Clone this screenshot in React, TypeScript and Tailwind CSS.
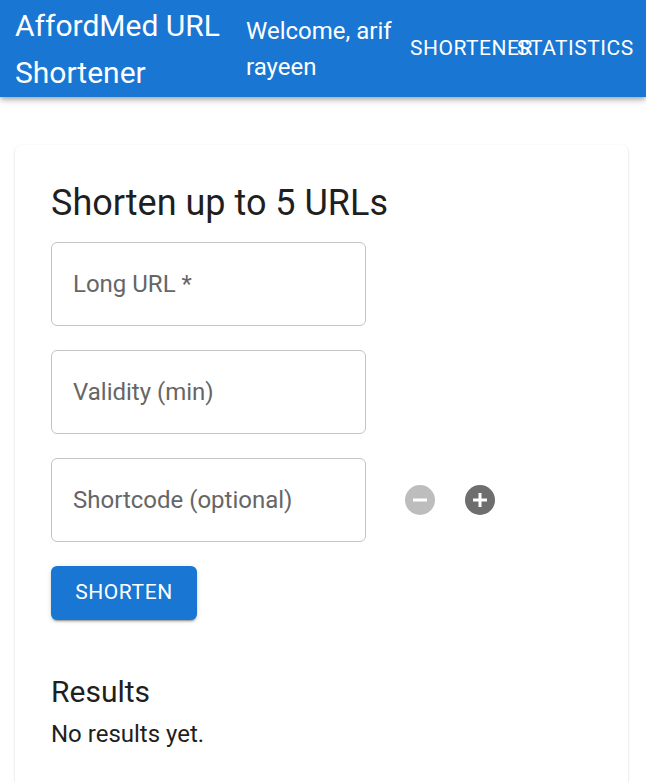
const fields = ['Long URL *', 'Validity (min)', 'Shortcode (optional)'];

function Field({ label, last }: { label: string; last?: boolean }) {
  return (
    <div className="flex items-center">
      <div className="w-[315px] h-[84px] border border-[#c4c4c4] rounded-[6px] flex items-center px-[21px]">
        <span className="text-[24px] text-[#666666]">{label}</span>
      </div>
      {last && (
        <div className="flex items-center ml-[39px] gap-[30px]">
          <svg width="30" height="30" viewBox="0 0 30 30">
            <circle cx="15" cy="15" r="15" fill="#bdbdbd" />
            <rect x="8" y="13.5" width="14" height="3" fill="#fff" />
          </svg>
          <svg width="30" height="30" viewBox="0 0 30 30">
            <circle cx="15" cy="15" r="15" fill="#6e6e6e" />
            <rect x="8" y="13.5" width="14" height="3" fill="#fff" />
            <rect x="13.5" y="8" width="3" height="14" fill="#fff" />
          </svg>
        </div>
      )}
    </div>
  );
}

export default function App() {
  return (
    <div className="min-h-[782px] bg-white font-['Roboto',sans-serif] text-[#1f1f1f] overflow-hidden">
      {/* App bar */}
      <header className="h-[97px] bg-[#1976d2] text-white flex items-center pl-[15px] shadow-[0_2px_4px_-1px_rgba(0,0,0,0.2),0_4px_5px_0_rgba(0,0,0,0.14),0_1px_10px_0_rgba(0,0,0,0.12)]">
        <div className="w-[231px] text-[30px] leading-[47px]">AffordMed URL Shortener</div>
        <div className="w-[164px] text-[24px] leading-[36px]">Welcome, arif rayeen</div>
        <div className="flex items-center text-[21px] tracking-[0.5px] uppercase">
          <span className="w-[107px] whitespace-nowrap">Shortener</span>
          <span className="whitespace-nowrap">Statistics</span>
        </div>
      </header>

      {/* Main card */}
      <main className="pt-[48px] pl-[15px]">
        <div className="w-[613px] rounded-[6px] bg-white shadow-[0_2px_1px_-1px_rgba(0,0,0,0.2),0_1px_1px_0_rgba(0,0,0,0.14),0_1px_3px_0_rgba(0,0,0,0.12)] px-[36px] pt-[34px] pb-[40px]">
          <h1 className="text-[36px] leading-[48px] mb-[15px]">Shorten up to 5 URLs</h1>
          <div className="flex flex-col gap-[24px]">
            {fields.map((f, i) => (
              <Field key={f} label={f} last={i === fields.length - 1} />
            ))}
          </div>
          <button className="mt-[24px] w-[146px] h-[54px] rounded-[6px] bg-[#1976d2] text-white text-[21px] tracking-[0.6px] shadow-[0_3px_1px_-2px_rgba(0,0,0,0.2),0_2px_2px_0_rgba(0,0,0,0.14),0_1px_5px_0_rgba(0,0,0,0.12)]">
            SHORTEN
          </button>
          <h2 className="mt-[48px] text-[30px] leading-[48px]">Results</h2>
          <p className="text-[24px] leading-[36px]">No results yet.</p>
        </div>
      </main>
    </div>
  );
}
